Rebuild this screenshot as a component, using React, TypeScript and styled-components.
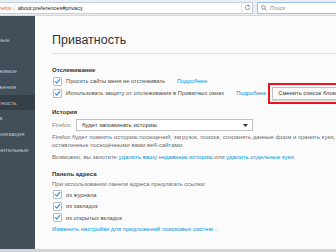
import React from "react";
import styled, { createGlobalStyle } from "styled-components";

const GlobalStyle = createGlobalStyle`
  html, body {
    margin: 0;
    padding: 0;
    background: #fbfbfb;
  }
  body {
    font-family: "Liberation Sans", Arial, sans-serif;
  }
`;

const Page = styled.div`
  width: 336px;
  height: 252px;
  overflow: hidden;
  display: flex;
  flex-direction: column;
  background: #fbfbfb;
`;

const TopBar = styled.div`
  height: 16px;
  flex: none;
  display: flex;
  align-items: center;
  gap: 4px;
  background: #eaeef2;
  border-bottom: 1px solid #d3d8de;
  box-sizing: border-box;
`;

const UrlField = styled.div`
  flex: 1;
  height: 12px;
  display: flex;
  align-items: center;
  background: #fff;
  border: 1px solid #c3cfdc;
  border-left: none;
  box-sizing: border-box;
  font-size: 5.5px;
  white-space: nowrap;
  overflow: hidden;
`;

const Brand = styled.span`
  color: #e66000;
  margin-left: -5px;
  padding-right: 2px;
  border-right: 1px solid #dcdcdc;
`;

const UrlText = styled.span`
  color: #222;
  margin-left: 3px;
  flex: 1;
`;

const Reload = styled.span`
  width: 10px;
  height: 100%;
  display: flex;
  align-items: center;
  justify-content: center;
  border-left: 1px solid #e4e4e4;
`;

const SearchField = styled.div`
  width: 79px;
  height: 12px;
  display: flex;
  align-items: center;
  gap: 3px;
  padding-left: 3px;
  background: #fff;
  border: 1px solid #9dbfe6;
  border-right: none;
  box-sizing: border-box;
  font-size: 5.5px;
  font-style: italic;
  color: #8a8a8a;
`;

const Main = styled.div`
  flex: 1;
  display: flex;
  min-height: 0;
`;

const Sidebar = styled.nav`
  width: 35px;
  flex: none;
  background: #424f5a;
  padding-top: 16px;
  box-sizing: border-box;
  overflow: hidden;
`;

const NavItem = styled.div<{ $active?: boolean }>`
  height: 15.7px;
  display: flex;
  align-items: center;
  font-size: 6px;
  white-space: nowrap;
  color: #bcc3ca;
  background: ${(p) => (p.$active ? "#343f48" : "transparent")};
  & > span {
    margin-left: -19px;
  }
`;

const Content = styled.div`
  flex: 1;
  padding: 16px 0 0 17px;
  box-sizing: border-box;
  overflow: hidden;
  white-space: nowrap;
  color: #4d4d4d;
  font-size: 6px;
  line-height: 8px;
`;

const Title = styled.h1`
  margin: 0;
  font-size: 12.5px;
  line-height: 16px;
  font-weight: normal;
  color: #333;
`;

const Rule = styled.div`
  margin-top: 5px;
  height: 1px;
  background: #e1e1e1;
`;

const Heading = styled.div<{ $gap: number }>`
  margin-top: ${(p) => p.$gap}px;
  font-weight: bold;
  color: #333;
  font-size: 6px;
  line-height: 8px;
`;

const CheckRow = styled.div<{ $gap?: number; $h?: number }>`
  margin-top: ${(p) => p.$gap ?? 0}px;
  height: ${(p) => p.$h ?? 12}px;
  display: flex;
  align-items: center;
  padding-left: 1px;
  font-size: 5.8px;
`;

const Box = styled.span`
  width: 9px;
  height: 9px;
  flex: none;
  box-sizing: border-box;
  border: 1px solid #b5bcc4;
  border-radius: 1px;
  background: #fff;
  display: flex;
  align-items: center;
  justify-content: center;
  margin-right: 4px;
`;

const Link = styled.span<{ $left?: number }>`
  color: #0095dd;
  margin-left: ${(p) => p.$left ?? 0}px;
`;

const Marker = styled.div`
  margin: -5px 0 -5px 2px;
  height: 21px;
  padding: 2px;
  box-sizing: border-box;
  border: 2px solid #e8141b;
  display: flex;
  align-items: center;
`;

const Button = styled.div`
  height: 13px;
  width: 80px;
  padding: 0 5px;
  display: flex;
  align-items: center;
  background: #fbfbfb;
  border: 1px solid #c1c1c1;
  box-shadow: 0 1px 1px rgba(0, 0, 0, 0.15);
  box-sizing: border-box;
  color: #333;
`;

const SelectRow = styled.div`
  margin-top: 3px;
  height: 12px;
  display: flex;
  align-items: center;
  gap: 4px;
`;

const Muted = styled.span`
  color: #8a8a8a;
`;

const Select = styled.div`
  width: 177px;
  height: 12px;
  box-sizing: border-box;
  display: flex;
  align-items: center;
  justify-content: space-between;
  padding: 0 4px 0 5px;
  background: #fff;
  border: 1px solid #c1c1c1;
  color: #333;
`;

const Para = styled.div<{ $gap: number }>`
  margin-top: ${(p) => p.$gap}px;
  color: #6d6d6d;
`;

const Line = styled.div``;

const Footer = styled.div`
  height: 3px;
  flex: none;
  background: #d4d4d4;
`;

function Check() {
  return (
    <Box>
      <svg width="7" height="7" viewBox="0 0 7 7">
        <path
          d="M1.3 3.7 L2.8 5.2 L5.7 1.4"
          fill="none"
          stroke="#2f8fde"
          strokeWidth="1.2"
          strokeLinecap="round"
          strokeLinejoin="round"
        />
      </svg>
    </Box>
  );
}

const navItems = [
  { label: "Основные" },
  { label: "Поиск" },
  { label: "Содержимое" },
  { label: "Приложения" },
  { label: "Приватность", active: true },
  { label: "Защита" },
  { label: "Синхронизация" },
  { label: "Дополнительные" },
];

export default function App() {
  return (
    <>
      <GlobalStyle />
      <Page>
        <TopBar>
          <UrlField>
            <Brand>Firefox</Brand>
            <UrlText>about:preferences#privacy</UrlText>
            <Reload>
              <svg width="7" height="7" viewBox="0 0 10 10">
                <path
                  d="M8 5 A3 3 0 1 1 6.5 2.4"
                  fill="none"
                  stroke="#8a8a8a"
                  strokeWidth="1.3"
                />
                <path d="M5.5 0.8 L8.5 2.2 L6 4.2 Z" fill="#8a8a8a" />
              </svg>
            </Reload>
          </UrlField>
          <SearchField>
            <svg width="6" height="6" viewBox="0 0 10 10">
              <circle cx="4" cy="4" r="3" fill="none" stroke="#7a7a7a" strokeWidth="1.4" />
              <path d="M6.2 6.2 L9 9" stroke="#7a7a7a" strokeWidth="1.6" />
            </svg>
            Поиск
          </SearchField>
        </TopBar>
        <Main>
          <Sidebar>
            {navItems.map((item) => (
              <NavItem key={item.label} $active={item.active}>
                <span>{item.label}</span>
              </NavItem>
            ))}
          </Sidebar>
          <Content>
            <Title>Приватность</Title>
            <Rule />
            <Heading $gap={12}>Отслеживание</Heading>
            <CheckRow $gap={1}>
              <Check />
              Просить сайты меня не отслеживать
              <Link $left={12}>Подробнее</Link>
            </CheckRow>
            <CheckRow>
              <Check />
              Использовать защиту от отслеживания в Приватных окнах
              <Link $left={12}>Подробнее</Link>
              <Marker>
                <Button>Сменить список блокировки</Button>
              </Marker>
            </CheckRow>
            <Heading $gap={9}>История</Heading>
            <SelectRow>
              <Muted>Firefox:</Muted>
              <Select>
                будет запоминать историю
                <svg width="5" height="3" viewBox="0 0 5 3">
                  <path d="M0 0 H5 L2.5 3 Z" fill="#333" />
                </svg>
              </Select>
            </SelectRow>
            <Para $gap={2}>
              <Line>
                Firefox будет помнить историю посещений, загрузок, поиска, сохранять данные форм и хранить куки,
              </Line>
              <Line>оставленные посещёнными вами веб-сайтами.</Line>
            </Para>
            <Para $gap={4}>
              Возможно, вы захотите <Link>удалить вашу недавнюю историю</Link> или{" "}
              <Link>удалить отдельные куки</Link>.
            </Para>
            <Heading $gap={9}>Панель адреса</Heading>
            <Para $gap={2}>При использовании панели адреса предлагать ссылки:</Para>
            <CheckRow $gap={1} $h={11.5}>
              <Check />
              из журнала
            </CheckRow>
            <CheckRow $h={11.5}>
              <Check />
              из закладок
            </CheckRow>
            <CheckRow $h={11.5}>
              <Check />
              из открытых вкладок
            </CheckRow>
            <Para $gap={1}>
              <Link>Изменить настройки для предложений поисковых систем...</Link>
            </Para>
          </Content>
        </Main>
        <Footer />
      </Page>
    </>
  );
}
